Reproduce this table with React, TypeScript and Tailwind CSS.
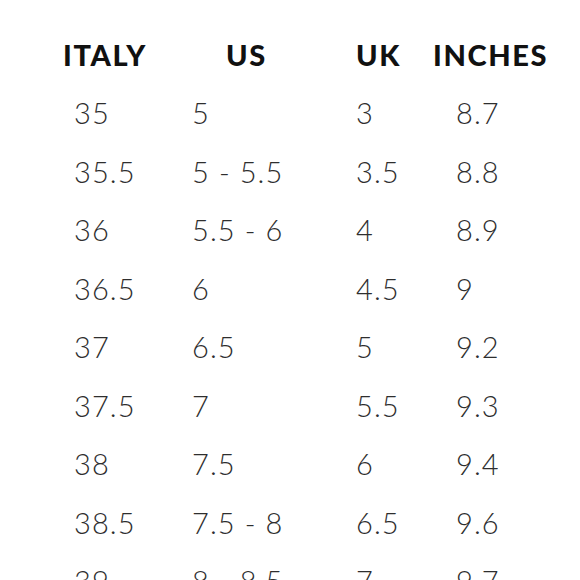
const rows = [
  ["35", "5", "3", "8.7"],
  ["35.5", "5 - 5.5", "3.5", "8.8"],
  ["36", "5.5 - 6", "4", "8.9"],
  ["36.5", "6", "4.5", "9"],
  ["37", "6.5", "5", "9.2"],
  ["37.5", "7", "5.5", "9.3"],
  ["38", "7.5", "6", "9.4"],
  ["38.5", "7.5 - 8", "6.5", "9.6"],
  ["39", "8 - 8.5", "7", "9.7"],
]

export default function App() {
  return (
    <div className="w-[580px] h-[580px] overflow-hidden bg-white pl-[63px] pt-[26px] font-['Lato','Liberation_Sans',sans-serif]">
      {/* Header */}
      <div className="flex leading-[58px] text-[29px] font-black tracking-[1.6px] text-[#111]">
        <div className="w-[129px]">ITALY</div>
        <div className="w-[164px] pl-[34px]">US</div>
        <div className="w-[77px]">UK</div>
        <div>INCHES</div>
      </div>

      {/* Sizes */}
      {rows.map((r, i) => (
        <div key={i} className="flex leading-[58.5px] text-[29px] font-light tracking-[1.1px] text-[#2e2e2e]">
          <div className="w-[129px] pl-[11px]">{r[0]}</div>
          <div className="w-[164px]">{r[1]}</div>
          <div className="w-[77px]">{r[2]}</div>
          <div className="pl-[23px]">{r[3]}</div>
        </div>
      ))}
    </div>
  )
}
